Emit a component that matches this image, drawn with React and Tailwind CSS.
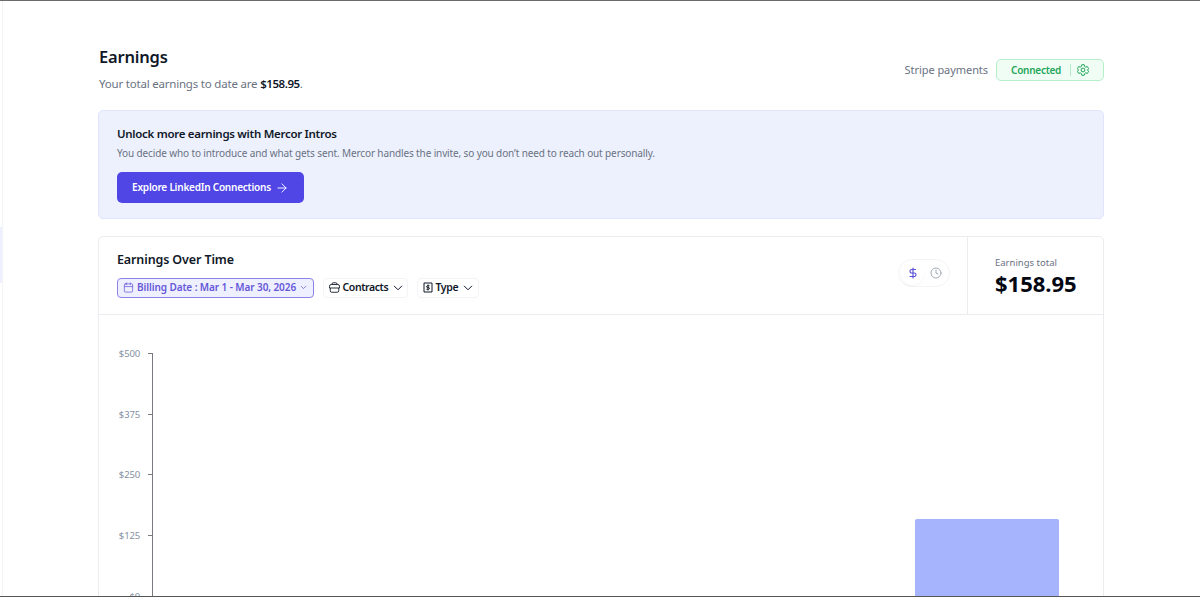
import React, { useState } from "react";
import { ArrowRight, Calendar, ChevronDown, Clock, DollarSign } from "lucide-react";

const ticks = [
  { label: "$500", y: 38 },
  { label: "$375", y: 98.75 },
  { label: "$250", y: 159.25 },
  { label: "$125", y: 220 },
  { label: "$0", y: 280.5 },
];

const GearIcon = () => (
  <svg
    className="w-3 h-3"
    viewBox="0 0 24 24"
    fill="none"
    stroke="currentColor"
    strokeWidth="2"
    strokeLinejoin="round"
  >
    <path d="M9.5 1.5h5l.8 3.4 2.2 1.3 3.3-1 2.5 4.3L20.8 12l2.5 2.5-2.5 4.3-3.3-1-2.2 1.3-.8 3.4h-5l-.8-3.4-2.2-1.3-3.3 1L.7 14.5 3.2 12 .7 9.5l2.5-4.3 3.3 1 2.2-1.3z" />
    <circle cx="12" cy="12" r="3.8" />
  </svg>
);

const BriefcaseIcon = () => (
  <svg
    className="w-[11px] h-[11px]"
    viewBox="0 0 22 22"
    fill="none"
    stroke="currentColor"
    strokeWidth="1.8"
    strokeLinejoin="round"
  >
    <path d="M6 5V4a2.5 2.5 0 0 1 2.5-2.5h5A2.5 2.5 0 0 1 16 4v1" />
    <path d="M4.5 5h13A3.5 3.5 0 0 1 21 8.500V12H1V8.500A3.500 3.500 0 0 1 4.500 5z" />
    <path d="M2.5 12v5.500a3 3 0 0 0 3 3h11a3 3 0 0 0 3-3V12" />
  </svg>
);

const TypeIcon = () => (
  <svg
    className="w-[10px] h-[11px]"
    viewBox="0 0 20 22"
    fill="none"
    stroke="currentColor"
    strokeWidth="2"
  >
    <path d="M2 2h16v18H2z" />
    <path d="M13 7.5H9a1.7 1.7 0 0 0 0 3.5h2a1.7 1.7 0 0 1 0 3.5H7M10 5v12" />
  </svg>
);

// Outlined filter button used in the chart header
const FilterChip = ({ icon, label, className }) => (
  <button
    className={`flex h-5 items-center rounded-[4px] border border-gray-100 pl-[5px] text-[10.5px] font-semibold tracking-[-0.4px] text-gray-900 whitespace-nowrap ${className}`}
  >
    {icon}
    <span className="ml-[2.5px]">{label}</span>
    <svg className="ml-[5px] w-[10px] h-[6px]" viewBox="0 0 10 6" fill="none" stroke="currentColor">
      <path d="M1 .8l4 4 4-4" />
    </svg>
  </button>
);

const EarningsChart = () => (
  <svg className="block w-full h-[282px]" viewBox="0 0 1004 282">
    <rect x="816" y="204" width="144" height="90" rx="2" fill="#a5b4fc" />
    <path d="M53.5 38.5V281.5H981" fill="none" stroke="#777a80" />
    {ticks.map((tick) => (
      <g key={tick.label}>
        <path d={`M49 ${Math.round(tick.y) + 0.5}h5`} stroke="#777a80" />
        <text
          x="41"
          y={tick.y + 4}
          textAnchor="end"
          className="fill-[#8590a2] text-[9.5px] tracking-[-0.15px]"
        >
          {tick.label}
        </text>
      </g>
    ))}
  </svg>
);

const App = () => {
  const [mode, setMode] = useState("money");

  return (
    <div className="relative h-[597px] overflow-hidden border-t border-[#6b6b6b] bg-white font-['Noto_Sans','Open_Sans',sans-serif] text-gray-900">
      {/* Edge of the collapsed sidebar */}
      <div className="absolute left-0 top-0 h-full w-[3px] border-r border-gray-100">
        <div className="mt-[226px] h-14 w-0.5 bg-[#eef0ff]" />
      </div>

      <main className="ml-[98px] w-[1006px] pt-11">
        <header className="flex h-[65px] justify-between pl-px">
          <div>
            <h1 className="h-6 text-[16.5px] leading-6 font-semibold tracking-[-0.2px]">Earnings</h1>
            <p className="mt-1.5 text-[11.5px] leading-[18px] tracking-[-0.2px] text-gray-500 whitespace-nowrap">
              Your total earnings to date are{" "}
              <span className="font-semibold tracking-[-0.45px] text-gray-900">$158.95</span>.
            </p>
          </div>
          <div className="mt-3.5 flex h-[22px] items-center gap-2">
            <span className="text-[11px] tracking-[-0.06px] text-gray-500 whitespace-nowrap">Stripe payments</span>
            <div className="flex h-[22px] w-[108px] items-center rounded-[5px] border border-[#b5efc9] bg-[#f0fdf4] pl-3.5 text-[10px] font-semibold text-[#22a559]">
              <span className="w-[52px] tracking-[-0.25px] whitespace-nowrap">Connected</span>
              <span className="ml-[7px] mr-1.5 h-3 w-px bg-[#b5e8c6]" />
              <GearIcon />
            </div>
          </div>
        </header>

        <section className="h-[109px] rounded-[5px] border border-[#e0e5fd] bg-[#edf1fe] px-[18px] pt-3.5">
          <h2 className="text-[11.5px] leading-[18px] font-semibold tracking-[-0.3px] whitespace-nowrap">
            Unlock more earnings with Mercor Intros
          </h2>
          <p className="mt-0.5 text-[10px] leading-4 tracking-[-0.123px] text-gray-500 whitespace-nowrap">
            You decide who to introduce and what gets sent. Mercor handles the invite, so you don’t need to reach out
            personally.
          </p>
          <button className="mt-[11px] flex h-[31px] w-[187px] items-center rounded-[5px] bg-[#4f46e5] pl-[15px] text-[10px] font-semibold tracking-[-0.22px] text-white whitespace-nowrap">
            <span className="w-[139px]">Explore LinkedIn Connections</span>
            <ArrowRight className="ml-1 w-[14px] h-[14px]" strokeWidth={1.6} />
          </button>
        </section>

        <section className="mt-[17px] h-[380px] rounded-[5px] border border-gray-200/80">
          <div className="flex h-[78px] border-b border-gray-200/80">
            <div className="flex flex-1 items-center justify-between pl-[18px] pr-[17px]">
              <div className="-mt-[3px]">
                <h2 className="text-[12.5px] leading-[18px] font-semibold tracking-[-0.12px] whitespace-nowrap">
                  Earnings Over Time
                </h2>
                <div className="mt-[9px] flex">
                  <button className="flex h-5 w-[197px] items-center rounded-[4px] border border-[#8c83e8] bg-[#eef0ff] pl-[5px] text-[10px] font-semibold tracking-[-0.09px] text-[#6557d8] whitespace-nowrap">
                    <Calendar className="w-[11px] h-[11px] shrink-0" strokeWidth={1.6} />
                    <span className="ml-[2.5px] w-[160px]">Billing Date : Mar 1 - Mar 30, 2026</span>
                    <ChevronDown className="ml-[2.5px] w-[9px] h-[9px] shrink-0" strokeWidth={2} />
                  </button>
                  <FilterChip icon={<BriefcaseIcon />} label="Contracts" className="ml-[9px] w-[85px]" />
                  <FilterChip icon={<TypeIcon />} label="Type" className="ml-[9px] w-[62px]" />
                </div>
              </div>
              <div className="-mt-[5px] flex h-7 w-[52px] items-center rounded-full border border-gray-100 p-0.5">
                <button
                  onClick={() => setMode("money")}
                  className={`flex h-[23px] w-[23px] items-center justify-center rounded-full ${mode === "money" ? "text-[#5b50d6] shadow-xs" : "text-gray-400"}`}
                >
                  <DollarSign className="w-3 h-3" strokeWidth={2.3} />
                </button>
                <button
                  onClick={() => setMode("hours")}
                  className={`flex h-[23px] w-[23px] items-center justify-center rounded-full ${mode === "hours" ? "text-[#5b50d6] shadow-xs" : "text-gray-400"}`}
                >
                  <Clock className="w-3 h-3" strokeWidth={1.8} />
                </button>
              </div>
            </div>
            <div className="w-[136px] border-l border-gray-200/80 pl-[27px] pt-[18px]">
              <p className="h-[15px] text-[9.5px] leading-4 text-gray-500 whitespace-nowrap">Earnings total</p>
              <p className="text-[22px] leading-[26px] font-bold text-gray-950">$158.95</p>
            </div>
          </div>
          <EarningsChart />
        </section>
      </main>

      <div className="absolute bottom-0 left-0 h-px w-full bg-[#555]" />
    </div>
  );
};

export default App;
